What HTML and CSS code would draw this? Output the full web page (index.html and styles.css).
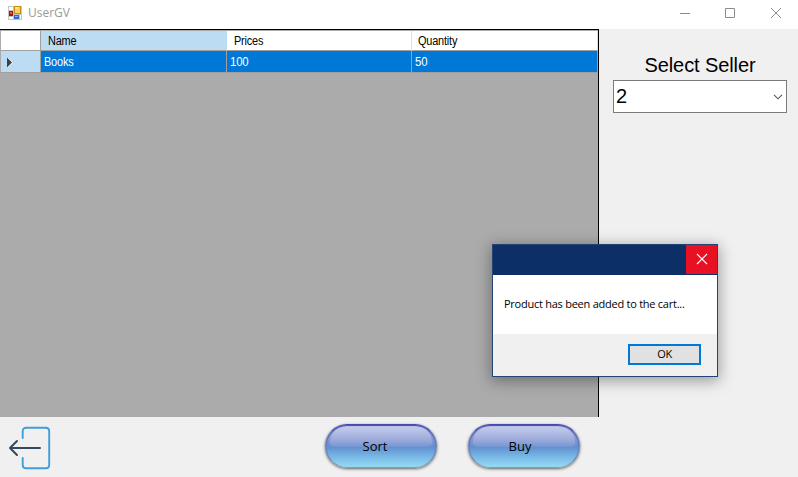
FILE: index.html
```html
<!DOCTYPE html>
<html lang="en">
<head>
<meta charset="utf-8">
<title>UserGV</title>
<link rel="stylesheet" href="styles.css">
</head>
<body>
<div class="window">
  <header class="titlebar">
    <svg class="app-icon" width="14" height="14" viewBox="0 0 14 14" shape-rendering="crispEdges">
      <rect width="14" height="14" fill="#c4c4c4"/>
      <rect x="1" y="1" width="4" height="3" fill="#fff"/>
      <rect x="1" y="11" width="4" height="2" fill="#fff"/>
      <rect x="6" y="0" width="7" height="8" fill="#c88c16"/>
      <rect x="7" y="1" width="5" height="6" fill="#ffd34d"/>
      <rect x="7" y="1" width="3" height="2" fill="#ffe68c"/>
      <rect x="1" y="5" width="4" height="5" fill="#a81414"/>
      <rect x="2" y="6" width="2" height="2" fill="#e05a4c"/>
      <rect x="6" y="9" width="5" height="4" fill="#3267ce"/>
      <rect x="7" y="10" width="3" height="1" fill="#83b3f7"/>
      <rect x="12" y="9" width="1" height="4" fill="#fff"/>
    </svg>
    <span class="title">UserGV</span>
    <svg class="controls" width="104" height="12" viewBox="0 0 104 12" fill="none" stroke="#8c8c8c">
      <path d="M1 6.5H11M46.5 1.5h9v9h-9z"/>
      <path d="M92 1L102 11M102 1L92 11"/>
    </svg>
  </header>
  <main class="main">
    <section class="grid">
      <div class="row head">
        <div class="cell"></div>
        <div class="cell current"><span>Name</span></div>
        <div class="cell"><span>Prices</span></div>
        <div class="cell last"><span>Quantity</span></div>
      </div>
      <div class="row data">
        <div class="cell marker"><svg width="7" height="11" viewBox="0 0 7 11"><path d="M1 .5L6 5.5L1 10.5z" fill="#404040"/><path d="M1.5 .5L6.5 5.5L1.5 10.5" fill="none" stroke="#fff" stroke-width=".6"/></svg></div>
        <div class="cell"><span>Books</span></div>
        <div class="cell"><span>100</span></div>
        <div class="cell"><span>50</span></div>
      </div>
    </section>
    <aside class="side">
      <div class="side-label">Select Seller</div>
      <div class="combo"><span>2</span>
        <svg width="10" height="6" viewBox="0 0 10 6" fill="none" stroke="#555" stroke-width="1.1"><path d="M1 .8L5 4.8L9 .8"/></svg>
      </div>
    </aside>
  </main>
  <footer class="bottom">
    <svg class="exit" width="44" height="44" viewBox="0 0 44 44" fill="none" stroke-linecap="round" stroke-linejoin="round">
      <path d="M14.7 12V5.3Q14.7 1.7 18.3 1.7H37.7Q41.2 1.7 41.2 5.3V38.7Q41.2 42.3 37.7 42.3H18.3Q14.7 42.3 14.7 38.7V32" stroke="#3f9ddc" stroke-width="1.9"/>
      <path d="M32 22H2M9 15L2 22L9 29" stroke="#34495e" stroke-width="2"/>
    </svg>
    <button class="pill sort"><span>Sort</span></button>
    <button class="pill buy"><span>Buy</span></button>
  </footer>
</div>
<div class="dialog">
  <div class="dialog-head">
    <div class="close"><svg width="12" height="12" viewBox="0 0 12 12" stroke="#fff" stroke-width="1.1"><path d="M1 1L11 11M11 1L1 11"/></svg></div>
  </div>
  <div class="dialog-body"><span>Product has been added to the cart...</span></div>
  <div class="dialog-foot"><button class="ok">OK</button></div>
</div>
</body>
</html>
```
FILE: styles.css
```css
* { box-sizing: border-box; }
body { margin: 0; overflow: hidden; font-family: "Liberation Sans", Arial, sans-serif; color: #000; }
button { font: inherit; color: inherit; padding: 0; }
svg { display: block; flex: none; }
.window { width: 798px; height: 477px; background: #f0f0f0; display: flex; flex-direction: column; }
.titlebar { height: 29px; background: #fff; display: flex; align-items: center; padding: 0 15px 3px 8px; flex: none; }
.title { font: 12px/16px "Open Sans", sans-serif; color: #999; margin-left: 6px; }
.controls { margin-left: auto; }
.main { display: flex; height: 388px; }
.grid { width: 599px; background: #ababab; border-top: 1px solid #000; border-right: 1px solid #000; padding-top: 1px; }
.row { display: grid; grid-template-columns: 40px 186px 185px 186px; padding-left: 1px; font-size: 12px; }
.cell { display: flex; align-items: center; border-right: 1px solid #a0a0a0; border-bottom: 1px solid #a0a0a0; }
.cell span { display: block; transform-origin: left; transform: scaleX(.91); letter-spacing: -0.2px; }
.head { height: 20px; }
.head .cell { background: #fff; border-right-color: #e0e0e0; padding-left: 7px; }
.head .cell:first-child { border-right-color: #a0a0a0; }
.head .current { background: #bcdcf4; border-right-color: #bcdcf4; }
.head .last { padding-left: 6px; }
.data { height: 22px; color: #fff; }
.data .cell { background: #0078d7; padding-left: 3px; }
.data .cell + .cell + .cell span { transform: scaleX(.95); }
.data .marker { background: #bcdcf4; padding: 1px 0 0 5px; }
.side { flex: 1; padding: 24px 11px 0 14px; }
.side-label { font-size: 20px; line-height: 24px; text-align: center; letter-spacing: -.1px; }
.combo { margin-top: 3px; height: 33px; border: 1px solid #7a7a7a; background: #fff; display: flex; align-items: center; justify-content: space-between; padding: 0 3px 0 2px; font-size: 20px; }
.bottom { height: 60px; display: flex; align-items: flex-start; padding: 7px 0 0 8px; }
.exit { margin-top: 2px; }
.pill { position: relative; width: 112px; height: 44px; border: 1px solid #6b86b4; border-top: 1.5px solid #444ba8; border-bottom-color: #879aa6; border-radius: 22px; background: linear-gradient(#a2aee0, #8294d1 38%, #638ed0 52%, #77b7e5 75%, #94dbf5); box-shadow: 0 1px 3px rgba(0,0,0,.6); font: 13px/18px "Open Sans", sans-serif; padding-bottom: 1px; }
.pill::before { content: ""; position: absolute; left: 4px; right: 4px; top: 1px; height: 21px; border-radius: 18px 18px 5px 5px; background: linear-gradient(rgba(255,255,255,.4), rgba(255,255,255,.08)); }
.pill::after { content: ""; position: absolute; inset: 0; border-radius: 22px; box-shadow: inset 0 1px 1px #444bb0; }
.pill span { position: relative; left: -6px; }
.sort { margin-left: 273px; }
.buy { margin-left: 31px; }
.buy span { left: -4px; }
.dialog { position: absolute; left: 492px; top: 244px; width: 226px; height: 133px; border: 1px solid #244477; background: #fff; box-shadow: 0 3px 14px 1px rgba(0,0,0,.36); font: 11px/15px "Open Sans", sans-serif; display: flex; flex-direction: column; }
.dialog-head { height: 30px; background: #0c2f67; display: flex; justify-content: flex-end; }
.close { width: 31px; height: 29px; background: #e81123; display: flex; align-items: center; justify-content: center; padding-bottom: 2px; }
.dialog-body { height: 59px; display: flex; align-items: center; padding: 0 0 2px 11px; white-space: nowrap; letter-spacing: -.25px; }
.dialog-foot { flex: 1; background: #f0f0f0; display: flex; justify-content: flex-end; padding: 10px 16px 0 0; }
.ok { width: 73px; height: 21px; border: 2px solid #0078d7; background: #e1e1e1; padding-bottom: 2px; letter-spacing: -.3px; }
```
